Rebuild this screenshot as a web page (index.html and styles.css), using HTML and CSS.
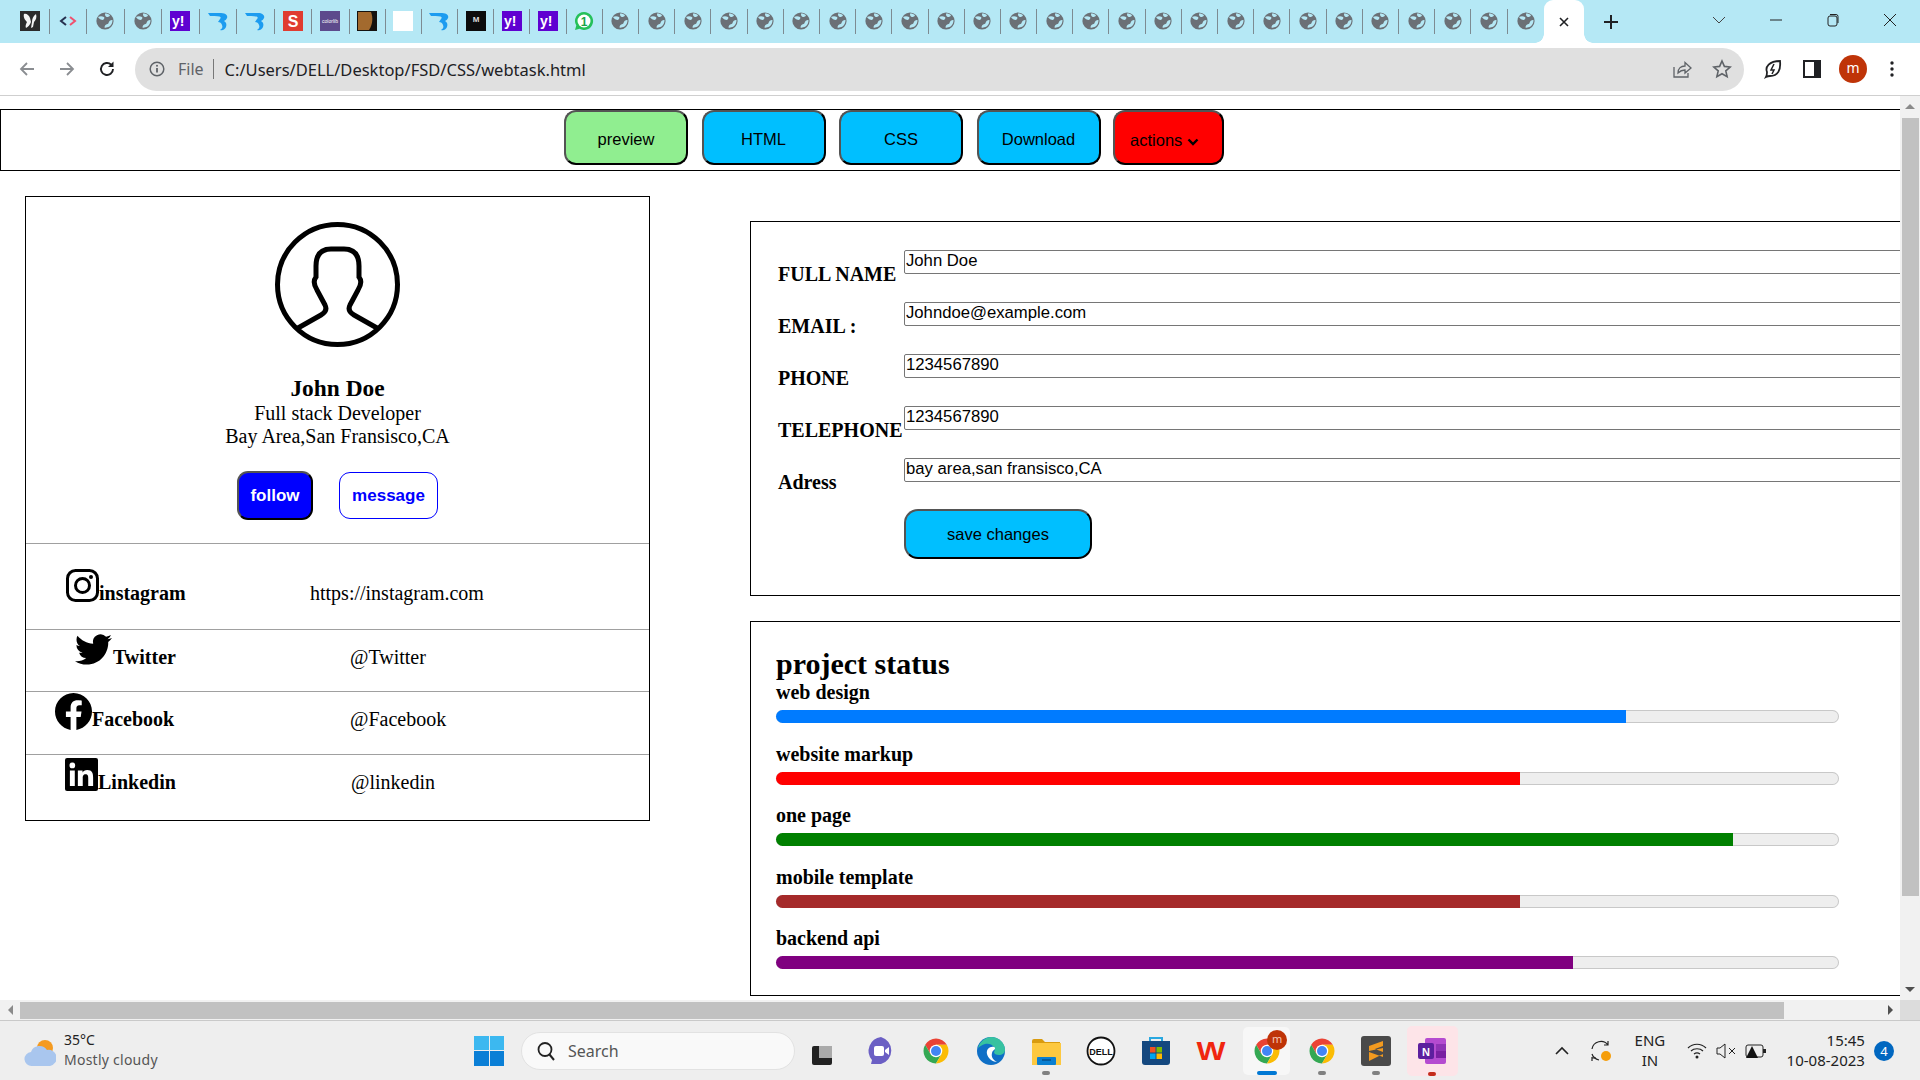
FILE: index.html
```html
<!DOCTYPE html>
<html lang="en">
  <head>
    <meta charset="UTF-8" />
    <title>webtask</title>
    <link rel="stylesheet" href="styles.css">
  </head>
  <body>
    <svg class="defs" width="0" height="0">
      <symbol id="globe" viewBox="0 0 20 20">
        <circle cx="10" cy="10" r="8.6" fill="#6b7076"/>
        <path d="M3 6c2-1 4-1 6 0 1 1 0 2-1 3-2 0-4-1-5-3zM10 2.5c2 0 4 .5 5 2-1 1.500-3 2-4 1-1-.5-1-2-1-3zM17.500 9c0 3-1 5-3 6.500-2 1-4 1.500-5 1 0-2 1-3 3-3.500 1 0 1-2 2-3 1-1 2-1 3-1z" fill="#b5e8f5"/>
      </symbol>
      <symbol id="swoosh" viewBox="0 0 20 20">
        <path d="M0 2h13c5 0 7 3 6 5-.5 1.500-2 2.500-3 3 2 1 3 3 2 6-1 2-3 4-6 3 2-1 3-3 2-5-.5-2-2-3-4-3l2-3c1-1 1-2-.5-2.500C9 5 4 5 2 5z" fill="#1c9cf0"/>
      </symbol>
      <symbol id="chrome" viewBox="0 0 48 48">
        <path d="M6.680 14A20 20 0 0 1 41.320 14H24L15.340 29z" fill="#ea4335"/>
        <path d="M24 44A20 20 0 0 1 6.680 14L15.340 29H32.660z" fill="#34a853"/>
        <path d="M41.320 14A20 20 0 0 1 24 44L32.660 29 24 14z" fill="#fbbc04"/>
        <circle cx="24" cy="24" r="10" fill="#fff"/>
        <circle cx="24" cy="24" r="8" fill="#4285f4"/>
      </symbol>
    </svg>

    <div class="browser">
      <div class="tabstrip">
        <div class="tab wide">
          <svg class="favicon" viewBox="0 0 20 20"><rect width="20" height="20" fill="#2b2b2b"/><path d="M4 3c2-1 5 1 6 4l1 4c-1 3-3 5-5 6-1-2 0-4 1-6C5 9 3 6 4 3z" fill="#f4f4f4"/><path d="M12 11c0-3 1-6 4-8 1 3 0 6-2 8l-1 5-2 1z" fill="#f4f4f4"/></svg>
        </div>
        <div class="tab wide">
          <svg class="favicon" viewBox="0 0 20 20"><path d="M8 6l-5 4 5 4" fill="none" stroke="#26304f" stroke-width="2"/><path d="M12 6l5 4-5 4" fill="none" stroke="#f0506e" stroke-width="2"/></svg>
        </div>
        <div class="tab wide"><svg class="favicon"><use href="#globe"/></svg></div>
        <div class="tab wide"><svg class="favicon"><use href="#globe"/></svg></div>
        <div class="tab wide">
          <svg class="favicon" viewBox="0 0 20 20"><rect width="20" height="20" fill="#5f01d1"/><text x="2" y="15" class="glyph-yahoo">y!</text></svg>
        </div>
        <div class="tab wide"><svg class="favicon"><use href="#swoosh"/></svg></div>
        <div class="tab wide"><svg class="favicon"><use href="#swoosh"/></svg></div>
        <div class="tab wide">
          <svg class="favicon" viewBox="0 0 20 20"><rect width="20" height="20" fill="#e03c31"/><text x="10" y="16" class="glyph-s">S</text></svg>
        </div>
        <div class="tab wide">
          <svg class="favicon" viewBox="0 0 20 20"><rect width="20" height="20" fill="#5d4a8c"/><text x="10" y="12" class="glyph-colorlib">colorlib</text></svg>
        </div>
        <div class="tab">
          <svg class="favicon" viewBox="0 0 20 20"><rect width="20" height="20" fill="#15120f"/><path d="M1 1h13c2 5 2 12-2 18H1z" fill="#a36a2e"/></svg>
        </div>
        <div class="tab"><svg class="favicon" viewBox="0 0 20 20"><rect width="20" height="20" fill="#fff"/></svg></div>
        <div class="tab"><svg class="favicon"><use href="#swoosh"/></svg></div>
        <div class="tab">
          <svg class="favicon" viewBox="0 0 20 20"><rect width="20" height="20" fill="#0c0c0c"/><text x="10" y="11" class="glyph-m">M</text></svg>
        </div>
        <div class="tab">
          <svg class="favicon" viewBox="0 0 20 20"><rect width="20" height="20" fill="#5f01d1"/><text x="2" y="15" class="glyph-yahoo">y!</text></svg>
        </div>
        <div class="tab">
          <svg class="favicon" viewBox="0 0 20 20"><rect width="20" height="20" fill="#5f01d1"/><text x="2" y="15" class="glyph-yahoo">y!</text></svg>
        </div>
        <div class="tab">
          <svg class="favicon" viewBox="0 0 20 20"><path d="M10 1a9 9 0 0 0-7.700 13.600L1 19l4.600-1.200A9 9 0 1 0 10 1z" fill="#25c05a"/><circle cx="10" cy="10" r="6.500" fill="#fff"/><text x="10" y="14.500" class="glyph-one">1</text></svg>
        </div>
        <div class="tab"><svg class="favicon"><use href="#globe"/></svg></div>
        <div class="tab"><svg class="favicon"><use href="#globe"/></svg></div>
        <div class="tab"><svg class="favicon"><use href="#globe"/></svg></div>
        <div class="tab"><svg class="favicon"><use href="#globe"/></svg></div>
        <div class="tab"><svg class="favicon"><use href="#globe"/></svg></div>
        <div class="tab"><svg class="favicon"><use href="#globe"/></svg></div>
        <div class="tab"><svg class="favicon"><use href="#globe"/></svg></div>
        <div class="tab"><svg class="favicon"><use href="#globe"/></svg></div>
        <div class="tab"><svg class="favicon"><use href="#globe"/></svg></div>
        <div class="tab"><svg class="favicon"><use href="#globe"/></svg></div>
        <div class="tab"><svg class="favicon"><use href="#globe"/></svg></div>
        <div class="tab"><svg class="favicon"><use href="#globe"/></svg></div>
        <div class="tab"><svg class="favicon"><use href="#globe"/></svg></div>
        <div class="tab"><svg class="favicon"><use href="#globe"/></svg></div>
        <div class="tab"><svg class="favicon"><use href="#globe"/></svg></div>
        <div class="tab"><svg class="favicon"><use href="#globe"/></svg></div>
        <div class="tab"><svg class="favicon"><use href="#globe"/></svg></div>
        <div class="tab"><svg class="favicon"><use href="#globe"/></svg></div>
        <div class="tab"><svg class="favicon"><use href="#globe"/></svg></div>
        <div class="tab"><svg class="favicon"><use href="#globe"/></svg></div>
        <div class="tab"><svg class="favicon"><use href="#globe"/></svg></div>
        <div class="tab"><svg class="favicon"><use href="#globe"/></svg></div>
        <div class="tab"><svg class="favicon"><use href="#globe"/></svg></div>
        <div class="tab"><svg class="favicon"><use href="#globe"/></svg></div>
        <div class="tab"><svg class="favicon"><use href="#globe"/></svg></div>
        <div class="tab last"><svg class="favicon"><use href="#globe"/></svg></div>
        <div class="tab-active">
          <svg class="tool-icon small" viewBox="0 0 12 12"><path d="M2 2l8 8M10 2l-8 8" stroke="#202124" stroke-width="1.600"/></svg>
        </div>
        <svg class="new-tab" viewBox="0 0 16 16"><path d="M8 1v14M1 8h14" stroke="#202124" stroke-width="2"/></svg>
        <div class="win-controls">
          <svg class="win-icon" viewBox="0 0 14 14"><path d="M1 4l6 6 6-6" fill="none" stroke="#444" stroke-width="1"/></svg>
          <svg class="win-icon" viewBox="0 0 14 14"><path d="M1 7h12" stroke="#222" stroke-width="1"/></svg>
          <svg class="win-icon" viewBox="0 0 14 14"><rect x="2" y="3" width="9" height="10" rx="2" fill="none" stroke="#222"/><path d="M4 1.500h6a2 2 0 0 1 2 2V10" fill="none" stroke="#222"/></svg>
          <svg class="win-icon" viewBox="0 0 14 14"><path d="M1 1l12 12M13 1L1 13" stroke="#222" stroke-width="1"/></svg>
        </div>
      </div>

      <div class="toolbar">
        <svg class="tool-icon" viewBox="0 0 18 18"><path d="M16 9H3M9 3L3 9l6 6" fill="none" stroke="#8a8d91" stroke-width="1.800"/></svg>
        <svg class="tool-icon" viewBox="0 0 18 18"><path d="M2 9h13M9 3l6 6-6 6" fill="none" stroke="#8a8d91" stroke-width="1.800"/></svg>
        <svg class="tool-icon" viewBox="0 0 18 18"><path d="M15 9a6 6 0 1 1-1.800-4.300" fill="none" stroke="#202124" stroke-width="1.900"/><path d="M15.500 1.500v5.500H10z" fill="#202124"/></svg>
        <div class="omnibox">
          <svg class="info-icon" viewBox="0 0 16 16"><circle cx="8" cy="8" r="6.800" fill="none" stroke="#5f6368" stroke-width="1.500"/><path d="M8 7v4.500" stroke="#5f6368" stroke-width="1.800"/><circle cx="8" cy="4.800" r="1" fill="#5f6368"/></svg>
          <span class="scheme">File</span>
          <span class="url">C:/Users/DELL/Desktop/FSD/CSS/webtask.html</span>
          <svg class="omni-share" viewBox="0 0 20 20"><path d="M2 8v10h14v-4" fill="none" stroke="#5f6368" stroke-width="1.300"/><path d="M6 14c0-5 3-7 7-7V3.500l6 5.500-6 5V11c-3 0-5 1-7 3z" fill="none" stroke="#5f6368" stroke-width="1.300"/></svg>
          <svg class="omni-star" viewBox="0 0 20 20"><path d="M10 2l2.400 5.400 5.800.6-4.400 3.900 1.300 5.800-5.100-3-5.100 3 1.300-5.800L1.800 8l5.800-.6z" fill="none" stroke="#5f6368" stroke-width="1.600"/></svg>
        </div>
        <svg class="ext-leaf" viewBox="0 0 20 20"><path d="M3 18c1-2 1-3 1-5C2 8 6 2 17 2c1 9-2 15-10 15-1 0-2 0-4 1z" fill="none" stroke="#202124" stroke-width="1.800"/><path d="M11 5l-3 6h3l-2 4" fill="none" stroke="#202124" stroke-width="1.500"/></svg>
        <svg class="ext-panel" viewBox="0 0 18 18"><rect x="1" y="1" width="16" height="16" fill="#fff" stroke="#202124" stroke-width="2"/><rect x="11" y="1" width="6" height="16" fill="#202124"/></svg>
        <span class="profile">m</span>
        <svg class="ext-menu" viewBox="0 0 6 18"><circle cx="3" cy="3" r="1.700" fill="#202124"/><circle cx="3" cy="9" r="1.700" fill="#202124"/><circle cx="3" cy="15" r="1.700" fill="#202124"/></svg>
      </div>

      <div class="viewport">
        <div class="page">
          <nav class="topnav">
            <button class="nav-btn green">preview</button>
            <button class="nav-btn">HTML</button>
            <button class="nav-btn">CSS</button>
            <button class="nav-btn">Download</button>
            <button class="nav-btn red">actions
              <svg class="caret" viewBox="0 0 12 8"><path d="M1.500 1.500L6 6l4.500-4.500" fill="none" stroke="#000" stroke-width="2.400"/></svg>
            </button>
          </nav>

          <div class="columns">
            <section class="profile-card">
              <div class="profile-head">
                <svg class="avatar" viewBox="0 0 125 125">
                  <circle cx="62.500" cy="62.500" r="60" fill="none" stroke="#000" stroke-width="5"/>
                  <path d="M23 106L46 93Q53 89 50 83L42 68Q37 60 41 55V44Q41 27 56 27H69Q84 27 84 44V55Q88 60 83 68L75 83Q72 89 79 93L102 106" fill="none" stroke="#000" stroke-width="5"/>
                </svg>
                <h3 class="name">John Doe</h3>
                <div class="role">Full stack Developer</div>
                <div class="role">Bay Area,San Fransisco,CA</div>
                <div class="profile-actions">
                  <button class="follow">follow</button>
                  <button class="message">message</button>
                </div>
              </div>
              <div class="social-row instagram">
                <span class="social-name"><svg class="social-icon" viewBox="0 0 33 33"><rect x="1.500" y="1.500" width="30" height="30" rx="8" fill="none" stroke="#000" stroke-width="3"/><circle cx="16.500" cy="16.500" r="7" fill="none" stroke="#000" stroke-width="3"/><circle cx="25" cy="8" r="2" fill="#000"/></svg>instagram</span>
                <span class="social-value">https://instagram.com</span>
              </div>
              <div class="social-row twitter">
                <span class="social-name"><svg class="social-icon" viewBox="0 0 24 24"><path d="M23.953 4.570a10 10 0 0 1-2.825.775 4.958 4.958 0 0 0 2.163-2.723c-.951.555-2.005.959-3.127 1.184a4.920 4.920 0 0 0-8.384 4.482C7.690 8.095 4.067 6.130 1.640 3.162a4.822 4.822 0 0 0-.666 2.475c0 1.710.870 3.213 2.188 4.096a4.904 4.904 0 0 1-2.228-.616v.060a4.923 4.923 0 0 0 3.946 4.827 4.996 4.996 0 0 1-2.212.085 4.936 4.936 0 0 0 4.604 3.417 9.867 9.867 0 0 1-6.102 2.105c-.390 0-.779-.023-1.170-.067a13.995 13.995 0 0 0 7.557 2.209c9.053 0 13.998-7.496 13.998-13.985 0-.210 0-.420-.015-.630A9.935 9.935 0 0 0 24 4.590z"/></svg>Twitter</span>
                <span class="social-value">@Twitter</span>
              </div>
              <div class="social-row facebook">
                <span class="social-name"><svg class="social-icon" viewBox="0 0 24 24"><path d="M24 12.073c0-6.627-5.373-12-12-12s-12 5.373-12 12c0 5.990 4.388 10.954 10.125 11.854v-8.385H7.078v-3.470h3.047V9.430c0-3.007 1.792-4.669 4.533-4.669 1.312 0 2.686.235 2.686.235v2.953H15.830c-1.491 0-1.956.925-1.956 1.874v2.250h3.328l-.532 3.470h-2.796v8.385C19.612 23.027 24 18.062 24 12.073z"/></svg>Facebook</span>
                <span class="social-value">@Facebook</span>
              </div>
              <div class="social-row linkedin">
                <span class="social-name"><svg class="social-icon" viewBox="0 0 24 24"><rect width="24" height="24" rx="1.500"/><path fill="#fff" d="M20.447 20.452h-3.554v-5.569c0-1.328-.027-3.037-1.852-3.037-1.853 0-2.136 1.445-2.136 2.939v5.667H9.351V9h3.414v1.561h.046c.477-.9 1.637-1.850 3.370-1.850 3.601 0 4.267 2.370 4.267 5.455v6.286zM5.337 7.433a2.062 2.062 0 1 1 0-4.125 2.062 2.062 0 0 1 0 4.125zM7.119 20.452H3.555V9h3.564v11.452z"/></svg>Linkedin</span>
                <span class="social-value">@linkedin</span>
              </div>
            </section>

            <div class="right-col">
              <form class="panel form-panel">
                <div class="form-row"><label>FULL NAME</label><input type="text" value="John Doe" /></div>
                <div class="form-row"><label>EMAIL :</label><input type="text" value="Johndoe@example.com" /></div>
                <div class="form-row"><label>PHONE</label><input type="text" value="1234567890" /></div>
                <div class="form-row"><label>TELEPHONE</label><input type="text" value="1234567890" /></div>
                <div class="form-row"><label>Adress</label><input type="text" value="bay area,san fransisco,CA" /></div>
                <button type="button" class="save-btn">save changes</button>
              </form>

              <section class="panel status-panel">
                <h2>project status</h2>
                <div class="status-item">
                  <div class="status-label">web design</div>
                  <div class="track"><div class="fill blue" style="width: 80%"></div></div>
                </div>
                <div class="status-item">
                  <div class="status-label">website markup</div>
                  <div class="track"><div class="fill crimson" style="width: 70%"></div></div>
                </div>
                <div class="status-item">
                  <div class="status-label">one page</div>
                  <div class="track"><div class="fill forest" style="width: 90%"></div></div>
                </div>
                <div class="status-item">
                  <div class="status-label">mobile template</div>
                  <div class="track"><div class="fill brown" style="width: 70%"></div></div>
                </div>
                <div class="status-item">
                  <div class="status-label">backend api</div>
                  <div class="track"><div class="fill purple" style="width: 75%"></div></div>
                </div>
              </section>
            </div>
          </div>
        </div>

        <div class="vscroll">
          <span class="arrow-up"></span>
          <div class="vthumb"></div>
          <span class="arrow-down"></span>
        </div>
      </div>

      <div class="hscroll">
        <span class="arrow-left"></span>
        <div class="hthumb"></div>
        <span class="arrow-right"></span>
        <div class="corner"></div>
      </div>

      <footer class="taskbar">
        <div class="weather">
          <svg class="weather-icon" viewBox="0 0 32 28"><circle cx="21" cy="9" r="8" fill="#f49a20"/><path d="M8 27a7 7 0 0 1-1-14 9 9 0 0 1 16-2 8 8 0 0 1 3 16z" fill="#a9c6ee"/></svg>
          <div class="weather-text">
            <div class="temp">35°C</div>
            <div class="sky">Mostly cloudy</div>
          </div>
        </div>
        <div class="start">
          <i class="pane light"></i><i class="pane light"></i><i class="pane"></i><i class="pane"></i>
        </div>
        <div class="search">
          <svg class="search-icon" viewBox="0 0 20 20"><circle cx="9" cy="8.500" r="6.500" fill="none" stroke="#222" stroke-width="1.800"/><path d="M13.500 13.500L18 19" stroke="#222" stroke-width="2"/></svg>
          <span>Search</span>
        </div>
        <div class="apps">
          <div class="app">
            <svg class="app-icon" viewBox="0 0 30 30"><rect x="1" y="10" width="20" height="19" rx="2" fill="#222"/><rect x="8" y="2" width="21" height="20" rx="2" fill="#eee"/><rect x="8" y="10" width="13" height="12" fill="#aaa"/></svg>
          </div>
          <div class="app">
            <svg class="app-icon" viewBox="0 0 30 30"><path d="M15 1a14 14 0 0 1 0 27H5l1-4A14 14 0 0 1 15 1z" fill="#6b5fc4"/><rect x="8" y="10" width="10" height="10" rx="2" fill="#fff"/><path d="M19 14l4-3v8l-4-3z" fill="#fff"/></svg>
          </div>
          <div class="app"><svg class="app-icon"><use href="#chrome"/></svg></div>
          <div class="app">
            <svg class="app-icon" viewBox="0 0 30 30"><circle cx="15" cy="15" r="14" fill="#0f6fc6"/><path d="M2 12C4 5 10 1 15 1c8 0 14 6 14 13 0 3-3 5-6 5-3 0-5-1-5-3 1-1 1-3 0-5-2-3-6-4-9-3-3 1-5 2-7 4z" fill="#37c2a0"/><path d="M18 11c-4-1-8 2-7 7 1 4 5 8 10 8-4-2-6-5-5-9 0-2 2-3 3-4 0-1 0-2-1-2z" fill="#fff"/></svg>
          </div>
          <div class="app">
            <svg class="app-icon" viewBox="0 0 30 30"><path d="M1 5a2 2 0 0 1 2-2h8l3 3h15v4H1z" fill="#d99b0f"/><rect x="1" y="7" width="29" height="22" fill="#fdc83f"/><rect x="6" y="21" width="19" height="8" rx="1" fill="#0a7fd1"/><path d="M11 24h9" stroke="#074f8a" stroke-width="1.500"/></svg>
            <i class="dot"></i>
          </div>
          <div class="app">
            <svg class="app-icon" viewBox="0 0 30 30"><circle cx="15" cy="15" r="13.500" fill="#fff" stroke="#111" stroke-width="1.800"/><text x="15" y="18.500" class="glyph-dell">DELL</text></svg>
          </div>
          <div class="app">
            <svg class="app-icon" viewBox="0 0 30 30"><path d="M9 5V2h12v3" fill="none" stroke="#29a8e0" stroke-width="2"/><path d="M1 5h28v21a3 3 0 0 1-3 3H4a3 3 0 0 1-3-3z" fill="#14487f"/><rect x="9" y="11" width="5.500" height="5.500" fill="#f25022"/><rect x="15.500" y="11" width="5.500" height="5.500" fill="#7fba00"/><rect x="9" y="17.500" width="5.500" height="5.500" fill="#00a4ef"/><rect x="15.500" y="17.500" width="5.500" height="5.500" fill="#ffb900"/></svg>
          </div>
          <div class="app">
            <svg class="app-icon" viewBox="0 0 30 30"><text x="0.500" y="24" class="glyph-wps" textLength="29" lengthAdjust="spacingAndGlyphs">W</text></svg>
          </div>
          <div class="app current">
            <svg class="app-icon"><use href="#chrome"/></svg>
            <span class="app-badge">m</span>
            <i class="dot active"></i>
          </div>
          <div class="app">
            <svg class="app-icon"><use href="#chrome"/></svg>
            <i class="dot"></i>
          </div>
          <div class="app">
            <svg class="app-icon" viewBox="0 0 30 30"><rect width="30" height="30" rx="3" fill="#4a4a4a"/><path d="M22 5L8 10v6l14 5v-5l-8-3 8-3zM8 15l14-3v6L8 25z" fill="#f29a1f"/></svg>
            <i class="dot"></i>
          </div>
          <div class="app pinned">
            <svg class="app-icon" viewBox="0 0 30 30"><rect x="8" y="2" width="21" height="26" rx="2" fill="#b44bd0"/><rect x="19" y="8" width="10" height="7" fill="#8f33b5"/><rect x="19" y="15" width="10" height="7" fill="#7a1fa2"/><rect x="1" y="7" width="16" height="16" rx="2" fill="#5c1f9e"/><text x="9" y="20" class="glyph-n">N</text></svg>
            <i class="dot red"></i>
          </div>
        </div>
        <div class="tray">
          <svg class="tray-icon chevron" viewBox="0 0 16 16"><path d="M2 11l6-6 6 6" fill="none" stroke="#222" stroke-width="1.600"/></svg>
          <svg class="tray-icon sync" viewBox="0 0 22 22"><path d="M1 9a9 9 0 0 1 16-4M17 1v4h-4M1 17v4M1 18h4" fill="none" stroke="#222" stroke-width="1.200"/><path d="M1 14c1 3 3 5 7 6" fill="none" stroke="#222" stroke-width="1.200"/><circle cx="15" cy="16" r="5" fill="#f59e0b"/></svg>
          <div class="lang"><div>ENG</div><div>IN</div></div>
          <svg class="tray-icon wifi" viewBox="0 0 20 16"><path d="M1 5c5-5 13-5 18 0M4 8c3-3 9-3 12 0M7 11c2-1.500 4-1.500 6 0" fill="none" stroke="#222" stroke-width="1.200"/><circle cx="10" cy="14" r="1.500" fill="#222"/></svg>
          <svg class="tray-icon volume" viewBox="0 0 20 16"><path d="M1 5h3l5-4v14l-5-4H1z" fill="none" stroke="#222"/><path d="M13 5l6 6M19 5l-6 6" stroke="#222"/></svg>
          <svg class="tray-icon battery" viewBox="0 0 22 16"><rect x="1" y="2" width="17" height="12" rx="2" fill="none" stroke="#222"/><rect x="18" y="6" width="3" height="4" fill="#222"/><path d="M7 3l6 12H1z" fill="#111"/></svg>
          <div class="clock"><div>15:45</div><div>10-08-2023</div></div>
          <span class="notify">4</span>
        </div>
      </footer>
    </div>
  </body>
</html>
```

FILE: styles.css
```css
html,
body {
  margin: 0;
  height: 1080px;
  overflow: hidden;
}
.defs {
  position: absolute;
}
.browser {
  width: 1920px;
  height: 1080px;
  display: flex;
  flex-direction: column;
  font-family: 'Liberation Serif', serif;
  background: #fff;
}

/* tabs */
.tabstrip {
  height: 43px;
  background: #b5e8f5;
  display: flex;
  align-items: center;
  padding-left: 12px;
  flex: none;
}
.tab {
  width: 36.2px;
  height: 25px;
  display: flex;
  align-items: center;
  justify-content: center;
  border-right: 1px solid #7d8b92;
  box-sizing: border-box;
  flex: none;
  margin-top: -1px;
}
.tab.wide {
  width: 37.5px;
}
.tab.last {
  border-right: none;
}
.favicon {
  width: 20px;
  height: 20px;
}
.tab-active {
  width: 40px;
  height: 43px;
  background: #fff;
  border-radius: 9px 9px 0 0;
  display: flex;
  align-items: center;
  justify-content: center;
  position: relative;
  flex: none;
}
.tab-active::before,
.tab-active::after {
  content: "";
  position: absolute;
  bottom: 0;
  width: 9px;
  height: 9px;
}
.tab-active::before {
  left: -9px;
  background: radial-gradient(circle at 0 0, #b5e8f5 8.5px, #fff 9px);
}
.tab-active::after {
  right: -9px;
  background: radial-gradient(circle at 100% 0, #b5e8f5 8.5px, #fff 9px);
}
.new-tab {
  width: 16px;
  height: 16px;
  margin-left: 19px;
  flex: none;
}
.win-controls {
  margin-left: 93px;
  display: flex;
  align-items: center;
  gap: 43px;
  margin-top: -4px;
}
.win-icon {
  width: 14px;
  height: 14px;
}

/* toolbar */
.toolbar {
  height: 52px;
  flex: none;
  display: flex;
  align-items: center;
  padding-left: 18px;
  border-bottom: 1px solid #cfcfcf;
  margin-bottom: 0;
}
.tool-icon {
  width: 18px;
  height: 18px;
  margin-right: 22px;
}
.tool-icon.small {
  width: 12px;
  height: 12px;
  margin: 0;
}
.omnibox {
  width: 1609px;
  height: 43px;
  margin-left: -3px;
  background: #e0e0e0;
  border-radius: 22px;
  display: flex;
  align-items: center;
  padding-left: 14px;
  box-sizing: border-box;
  font-family: 'Noto Sans', sans-serif;
  font-size: 16px;
  flex: none;
}
.info-icon {
  width: 16px;
  height: 16px;
}
.scheme {
  color: #5f6368;
  margin-left: 13px;
  padding-right: 9px;
  border-right: 1px solid #777;
  line-height: 20px;
  font-size: 16px;
}
.url {
  color: #202124;
  margin-left: 11px;
  font-size: 16.5px;
}
.omni-share {
  width: 20px;
  height: 20px;
  margin-left: auto;
}
.omni-star {
  width: 20px;
  height: 20px;
  margin: 0 12px 0 20px;
}
.ext-leaf {
  width: 20px;
  height: 20px;
  margin-left: 19px;
  flex: none;
}
.ext-panel {
  width: 18px;
  height: 18px;
  margin-left: 20px;
  flex: none;
}
.profile {
  width: 28px;
  height: 28px;
  margin-left: 18px;
  border-radius: 50%;
  background: #bf3408;
  color: #fff;
  font-family: 'Noto Sans', sans-serif;
  font-size: 14px;
  line-height: 25px;
  text-align: center;
  flex: none;
}
.ext-menu {
  width: 6px;
  height: 18px;
  margin-left: 22px;
  flex: none;
}

/* page */
.viewport {
  height: 904px;
  display: flex;
  flex: none;
}
.page {
  width: 1900px;
  overflow: hidden;
  padding-top: 13px;
  box-sizing: border-box;
  color: #000;
}
.topnav {
  width: 2003px;
  height: 62px;
  box-sizing: border-box;
  border: 1px solid #000;
  display: flex;
  align-items: flex-start;
  gap: 13.5px;
  padding-left: 563px;
}
.nav-btn {
  width: 124px;
  height: 55px;
  background: #00bfff;
  border: 2px outset #000;
  border-radius: 12px;
  font-family: 'Liberation Sans', sans-serif;
  font-size: 16.5px;
  color: #000;
  padding: 0;
  padding-top: 4px;
}
.nav-btn.green {
  background: #90ee90;
}
.nav-btn.red {
  background: #f00;
  width: 111px;
  margin-left: -1px;
  padding: 6px 8px 0 0;
}
.caret {
  width: 12px;
  height: 8px;
}
.columns {
  display: flex;
  align-items: flex-start;
  width: 2003px;
  padding: 25px 0 0 25px;
  box-sizing: border-box;
}

/* profile card */
.profile-card {
  width: 625px;
  height: 625px;
  box-sizing: border-box;
  border: 1px solid #000;
  flex: none;
  font-size: 20px;
}
.profile-head {
  height: 346px;
  padding-top: 25px;
  box-sizing: border-box;
  text-align: center;
}
.avatar {
  width: 125px;
  height: 125px;
  display: block;
  margin: 0 auto;
}
.name {
  font-size: 23.4px;
  margin: 28px 0 0;
  line-height: 27px;
}
.role {
  line-height: 23px;
}
.profile-actions {
  display: flex;
  justify-content: center;
  align-items: center;
  gap: 26px;
  margin-top: 23px;
}
.follow,
.message {
  font-family: 'Liberation Sans', sans-serif;
  font-weight: 700;
  font-size: 17px;
  border-radius: 11px;
  padding: 0;
}
.follow {
  width: 76px;
  height: 49px;
  background: #00f;
  color: #fff;
  border: 2px outset #000;
}
.message {
  width: 99px;
  height: 47px;
  background: #fff;
  color: #00f;
  border: 1px solid #00f;
}
.social-row {
  display: grid;
  grid-template-columns: 284px 1fr;
  align-items: baseline;
  border-top: 1px solid #a0a0a0;
  box-sizing: border-box;
}
.social-name {
  font-weight: 700;
  white-space: nowrap;
}
.social-icon {
  vertical-align: baseline;
}
.instagram {
  height: 86px;
  padding-top: 25px;
}
.instagram .social-name {
  padding-left: 40px;
}
.instagram .social-icon {
  width: 33px;
  height: 33px;
  margin-bottom: -2px;
}
.twitter {
  height: 62px;
  padding-top: 1px;
}
.twitter .social-name {
  padding-left: 49px;
}
.twitter .social-icon {
  width: 37px;
  height: 37px;
  margin: 0 1px -4px 0;
}
.twitter .social-value {
  padding-left: 40px;
}
.facebook {
  height: 63px;
  padding-top: 1px;
}
.facebook .social-name {
  padding-left: 29px;
}
.facebook .social-icon {
  width: 37px;
  height: 37px;
  margin-bottom: -4px;
}
.facebook .social-value {
  padding-left: 40px;
}
.linkedin {
  flex: 1;
  padding-top: 3px;
}
.linkedin .social-name {
  padding-left: 39px;
}
.linkedin .social-icon {
  width: 33px;
  height: 33px;
  margin-bottom: -2px;
}
.linkedin .social-value {
  padding-left: 41px;
}

/* right column */
.right-col {
  margin-left: 100px;
  padding-top: 25px;
  width: 1240px;
  display: flex;
  flex-direction: column;
  gap: 25px;
}
.panel {
  border: 1px solid #000;
  height: 375px;
  box-sizing: border-box;
}
.form-panel {
  padding: 28px 0 0 27px;
}
.form-row {
  height: 52px;
  display: grid;
  grid-template-columns: 126px 1fr;
}
.form-row label {
  font-size: 20px;
  font-weight: 700;
  padding-top: 13px;
  line-height: 23px;
}
.form-row input {
  height: 24px;
  width: 1060px;
  box-sizing: border-box;
  border: 1px solid #767676;
  border-radius: 2px;
  padding: 0 2px 2px 1px;
  font-family: 'Liberation Sans', sans-serif;
  font-size: 16.7px;
  color: #000;
  background: #fff;
  outline: none;
}
.save-btn {
  display: block;
  margin: -1px 0 0 126px;
  width: 188px;
  height: 50px;
  background: #00bfff;
  border: 2px outset #000;
  border-radius: 14px;
  font-family: 'Liberation Sans', sans-serif;
  font-size: 16.5px;
  color: #000;
  padding: 0;
}
.status-panel {
  padding: 25px 0 0 25px;
}
.status-panel h2 {
  font-size: 30px;
  line-height: 34px;
  margin: 0;
}
.status-item {
  width: 1063px;
  height: 61.5px;
}
.status-label {
  font-size: 20px;
  font-weight: 700;
  line-height: 23px;
  margin-bottom: 6px;
}
.track {
  height: 13px;
  background: #eee;
  box-shadow: inset 0 0 0 1px #c8c8c8;
  border-radius: 7px;
  position: relative;
}
.fill {
  position: absolute;
  left: 0;
  top: 0;
  bottom: 0;
  border-radius: 7px 0 0 7px;
}
.blue {
  background: #007bff;
}
.crimson {
  background: #f00;
}
.forest {
  background: #008000;
}
.brown {
  background: #a52a2a;
}
.purple {
  background: #800080;
}

/* scrollbars */
.vscroll {
  width: 20px;
  background: #f1f1f1;
  display: flex;
  flex-direction: column;
  align-items: center;
  flex: none;
  position: relative;
}
.vthumb {
  width: 17px;
  height: 778px;
  margin-top: 9px;
  background: #c1c1c1;
}
.arrow-up {
  width: 0;
  height: 0;
  margin-top: 8px;
  border: 5px solid transparent;
  border-top: none;
  border-bottom: 5px solid #8a8a8a;
}
.arrow-down {
  width: 0;
  height: 0;
  margin-top: auto;
  margin-bottom: 8px;
  border: 5px solid transparent;
  border-bottom: none;
  border-top: 5px solid #505050;
}
.hscroll {
  height: 20px;
  background: #f1f1f1;
  display: flex;
  align-items: center;
  flex: none;
}
.hthumb {
  width: 1764px;
  height: 17px;
  margin-left: 7px;
  background: #c1c1c1;
}
.arrow-left {
  width: 0;
  height: 0;
  margin-left: 8px;
  border: 5px solid transparent;
  border-left: none;
  border-right: 5px solid #8a8a8a;
}
.arrow-right {
  width: 0;
  height: 0;
  margin-left: auto;
  margin-right: 7px;
  border: 5px solid transparent;
  border-right: none;
  border-left: 5px solid #505050;
}
.corner {
  width: 20px;
  height: 20px;
  background: #dcdcdc;
}

/* taskbar */
.taskbar {
  height: 60px;
  box-sizing: border-box;
  border-top: 1px solid #c9c9c9;
  background: #eee;
  display: flex;
  align-items: center;
  font-family: 'Noto Sans', sans-serif;
  color: #222;
  flex: none;
}
.weather {
  width: 474px;
  padding-left: 24px;
  box-sizing: border-box;
  display: flex;
  align-items: center;
  flex: none;
}
.weather-icon {
  width: 32px;
  height: 28px;
  margin-top: 4px;
}
.weather-text {
  margin: -2px 0 0 8px;
  font-size: 14px;
  line-height: 20px;
}
.sky {
  color: #555;
  letter-spacing: 0.25px;
}
.start {
  width: 30px;
  height: 30px;
  display: grid;
  grid-template-columns: 1fr 1fr;
  gap: 1px;
  flex: none;
}
.pane {
  background: #0a7fd6;
}
.pane.light {
  background: #3cb8f0;
}
.search {
  width: 274px;
  height: 38px;
  margin-left: 17px;
  box-sizing: border-box;
  border: 1px solid #e2e2e2;
  border-radius: 19px;
  background: #f9f9f9;
  display: flex;
  align-items: center;
  padding-left: 14px;
  font-size: 16px;
  color: #555;
  flex: none;
}
.search-icon {
  width: 20px;
  height: 20px;
  margin-right: 12px;
}
.apps {
  display: flex;
  align-items: center;
  margin-left: 4px;
  flex: none;
}
.app {
  width: 54.9px;
  height: 48px;
  display: flex;
  align-items: center;
  justify-content: center;
  position: relative;
  box-sizing: border-box;
  border-radius: 5px;
}
.app-icon {
  width: 30px;
  height: 30px;
}
.app.current {
  width: 47px;
  margin: 0 4px 0 5px;
  background: #f7f7f7;
}
.app.pinned {
  width: 51px;
  margin-left: 3px;
  height: 50px;
  background: #fde4e8;
}
.app-badge {
  position: absolute;
  top: 3px;
  right: 3px;
  width: 20px;
  height: 20px;
  border-radius: 50%;
  background: #bf3408;
  color: #f5c8b8;
  font-size: 11px;
  line-height: 18px;
  text-align: center;
}
.dot {
  position: absolute;
  bottom: 0;
  left: 50%;
  width: 8px;
  height: 4px;
  margin-left: -4px;
  border-radius: 2px;
  background: #808080;
}
.dot.active {
  width: 20px;
  margin-left: -10px;
  background: #0078d4;
}
.dot.red {
  background: #c42b1c;
}
.tray {
  display: flex;
  align-items: center;
  flex: none;
}
.tray-icon {
  flex: none;
}
.chevron {
  width: 16px;
  height: 16px;
  margin-left: 96px;
}
.sync {
  width: 22px;
  height: 22px;
  margin-left: 21px;
}
.lang {
  width: 32px;
  margin: -2px 0 0 21px;
  font-size: 15px;
  line-height: 20px;
  text-align: center;
}
.wifi {
  width: 20px;
  height: 16px;
  margin-left: 21px;
}
.volume {
  width: 20px;
  height: 16px;
  margin-left: 9px;
}
.battery {
  width: 22px;
  height: 16px;
  margin-left: 9px;
}
.clock {
  width: 90px;
  margin: -2px 0 0 8px;
  font-size: 15px;
  line-height: 20px;
  text-align: right;
  white-space: nowrap;
}
.notify {
  width: 20px;
  height: 20px;
  margin-left: 9px;
  border-radius: 50%;
  background: #0067c0;
  color: #fff;
  font-size: 13px;
  line-height: 20px;
  text-align: center;
  flex: none;
}

/* letters inside favicons */
.glyph-yahoo {
  font: 700 14px 'Liberation Sans', sans-serif;
  fill: #fff;
}
.glyph-s {
  font: 700 16px 'Liberation Sans', sans-serif;
  fill: #fff;
  text-anchor: middle;
}
.glyph-colorlib {
  font: 5px 'Liberation Sans', sans-serif;
  fill: #fff;
  text-anchor: middle;
}
.glyph-m {
  font: 700 8px 'Liberation Sans', sans-serif;
  fill: #ddd;
  text-anchor: middle;
}
.glyph-one {
  font: 700 12px 'Liberation Sans', sans-serif;
  fill: #1aa34a;
  text-anchor: middle;
}
.glyph-dell {
  font: 700 9px 'Liberation Sans', sans-serif;
  fill: #111;
  text-anchor: middle;
}
.glyph-wps {
  font: 700 26px 'Liberation Sans', sans-serif;
  fill: #f0260f;
}
.glyph-n {
  font: 700 11px 'Liberation Sans', sans-serif;
  fill: #fff;
  text-anchor: middle;
}
```
